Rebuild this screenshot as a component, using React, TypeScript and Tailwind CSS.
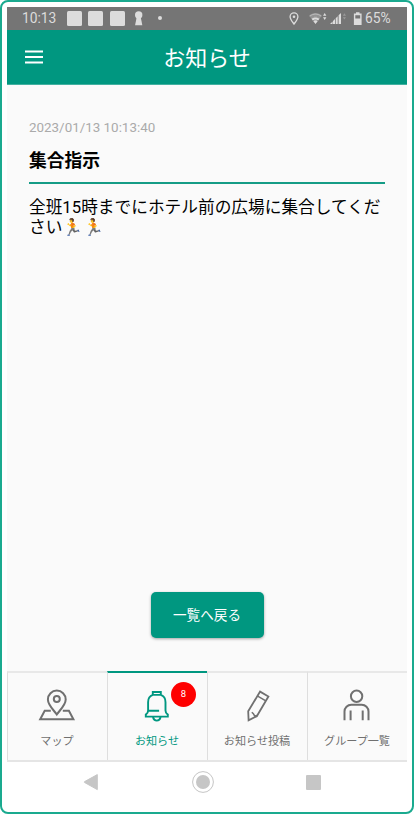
import React from "react";

type Tab = {
    label: string;
    icon: React.ReactNode;
    active?: boolean;
    badge?: number;
};

function MapIcon() {
    return (
        <svg width="38" height="34" viewBox="0 0 38 34" fill="none" stroke="currentColor" strokeWidth="2">
            <path d="M18.800 26.500C15.500 21.800 9.900 17 9.900 11.500a8.900 8.900 0 0 1 17.800 0C27.700 17 22.100 21.800 18.800 26.500z" />
            <circle cx="18.800" cy="10.900" r="3" />
            <path d="M12.800 22.800H6.700L2.200 31.300h33.200L30.900 22.800H24.800" />
        </svg>
    );
}

function BellIcon() {
    return (
        <svg width="26" height="34" viewBox="0 0 26 34" fill="none" stroke="currentColor" strokeWidth="1.9">
            <path d="M8.800 7.600V4h8v3.600M8.800 6.900C5.600 8 4.100 10.800 4.100 14.200v8.200c0 2-.8 3.200-2.300 4.200v2h22v-2c-1.500-1-2.300-2.200-2.300-4.200v-8.200c0-3.400-1.500-6.200-4.700-7.300z" />
            <path d="M4.100 22.700h11M9 29c.5 2.300 1.900 3.600 3.800 3.600s3.300-1.300 3.800-3.600" />
        </svg>
    );
}

function PencilIcon() {
    return (
        <svg width="26" height="34" viewBox="0 0 26 34" fill="none" stroke="currentColor" strokeWidth="1.8">
            <path d="M16.100 3.600l8.300 4.900-11.600 19.700-8.200 4.100-.4-9.100z" />
            <path d="M13.300 7.900l8.500 5M7.800 24.200l1.600 1.600 1.400 2.300 2.400-.5" strokeWidth="1.5" />
        </svg>
    );
}

function PersonIcon() {
    return (
        <svg width="28" height="34" viewBox="0 0 28 34" fill="none" stroke="currentColor" strokeWidth="2">
            <circle cx="13.600" cy="8.200" r="5.700" />
            <path d="M1.500 32.300V23.500a6.800 6.800 0 0 1 6.800-6.800h10.400a6.800 6.800 0 0 1 6.800 6.800V32.300M7.600 22.500V32.300M19.700 22.500V32.300" />
        </svg>
    );
}

const tabs: Tab[] = [
    { label: "マップ", icon: <MapIcon /> },
    { label: "お知らせ", icon: <BellIcon />, active: true, badge: 8 },
    { label: "お知らせ投稿", icon: <PencilIcon /> },
    { label: "グループ一覧", icon: <PersonIcon /> },
];

function StatusBar() {
    return (
        <div className="flex h-[23px] shrink-0 items-center bg-[#757575] pr-[16px] pl-[15px] text-[#dcdcdc]">
            <span className="w-[45px] text-[13.8px] leading-none">10:13</span>
            <div className="flex gap-[6.4px]">
                <span className="h-[15px] w-[15px] rounded-[1.5px] bg-[#dcdcdc]" />
                <span className="h-[15px] w-[15px] rounded-[1.5px] bg-[#dcdcdc]" />
                <span className="h-[15px] w-[15px] rounded-[1.5px] bg-[#dcdcdc]" />
            </div>
            <svg className="ml-[9px]" width="10" height="15" viewBox="0 0 10 15" fill="currentColor">
                <circle cx="4.700" cy="4" r="3.700" />
                <path d="M2.700 6h4l1.600 8.300H1.100z" />
            </svg>
            <span className="mb-px ml-[14px] h-1 w-1 rounded-full bg-[#dcdcdc]" />
            <svg className="mr-[9px] ml-auto" width="10" height="13" viewBox="0 0 10 13" fill="none" stroke="currentColor" strokeWidth="1.3">
                <path d="M5 12C3.200 9.500 1.100 7.200 1.100 4.700a3.900 3.900 0 0 1 7.800 0C8.900 7.200 6.800 9.500 5 12z" />
                <circle cx="5" cy="4.700" r="1.300" fill="currentColor" stroke="none" />
            </svg>
            {/* wifi, signal, battery */}
            <svg className="mr-[2px] shrink-0" width="55" height="16" viewBox="0 0 55 16" fill="currentColor">
                <path d="M1 4.500C4.500 1.100 10.500 1.100 14 4.500L7.500 13z" opacity=".3" />
                <path d="M3.200 7.200c2.500-2.100 6.100-2.100 8.600 0L7.500 13z" />
                <path d="M1.800 5.200c3.400-2.800 8-2.800 11.400 0" fill="none" stroke="#dcdcdc" strokeWidth="1" opacity=".55" />
                <path d="M3.200 7.600c2.600-2 6-2 8.600 0M5 9.800c1.600-1.200 3.400-1.200 5 0" fill="none" stroke="#757575" strokeWidth=".7" />
                <path d="M15 4.700l1.700-2.700 1.700 2.700zM15 6.200h3.400l-1.700 2.700z" />
                <path d="M22 13l2.600-2.600V13zM25 9.900l2-2v5.100h-2zM27.700 7.200l2-2V13h-2zM30.600 4.300l2.400-2.400V13h-2.400z" />
                <path d="M34.800 4.700l1.600-2.400L38 4.700zM34.800 6.200H38l-1.600 2.400z" opacity=".35" />
                <path d="M48 1.300h3.500v1.300h2.100V14h-7.700V2.600H48zM47.300 4.200v3.300h4.900V4.200z" fillRule="evenodd" />
            </svg>
            <span className="w-[26px] text-[13.8px] leading-none">65%</span>
        </div>
    );
}

function Header() {
    return (
        <header className="flex h-[55px] shrink-0 items-center border-b border-[#42b0a0] bg-[#009780] px-[18px] text-white">
            <button className="w-[18px]" aria-label="menu">
                <svg width="18" height="14" viewBox="0 0 18 14" stroke="currentColor" strokeWidth="1.8">
                    <path d="M0 1.500h18M0 7h18M0 12.500h18" />
                </svg>
            </button>
            <h1 className="flex-1 pt-[3px] pr-[18px] text-center text-[22px] leading-[50px]">お知らせ</h1>
        </header>
    );
}

function Notice() {
    return (
        <main className="flex flex-1 flex-col bg-[#fafafa] px-[22px] pt-[33px]">
            <time className="text-[13.4px] leading-5 text-[#aaa]">2023/01/13 10:13:40</time>
            <h2 className="mt-[11px] border-b-2 border-[#159c86] pb-[9px] text-[17.8px] leading-6 font-bold text-black">集合指示</h2>
            <p className="mt-[14px] text-[16.7px] leading-5 text-black">
                全班15時までにホテル前の広場に集合してください🏃🏃
            </p>
            <button className="mt-auto mb-[33px] h-[46px] w-[113px] self-center rounded-[5px] bg-[#009780] text-[13.6px] text-white shadow-[0_1px_3px_rgba(0,0,0,0.35)]">
                一覧へ戻る
            </button>
        </main>
    );
}

function TabBar() {
    return (
        <nav className="grid h-[91px] shrink-0 grid-cols-4 border-b-2 border-[#e5e5e5] bg-[#fafafa]">
            {tabs.map((tab) => (
                <div
                    key={tab.label}
                    className={`relative flex flex-col items-center border-t-2 border-l border-l-[#dedede] pt-[15px] pr-px ${
                        tab.active ? "border-t-[#009780] text-[#009780]" : "border-t-[#e8e8e8] text-[#707070]"
                    }`}
                >
                    {tab.icon}
                    <span className="mt-[12px] text-[11.1px] leading-4">{tab.label}</span>
                    {tab.badge && (
                        <span className="absolute top-[9px] left-[63px] flex h-[25px] w-[25px] items-center justify-center rounded-full bg-[#fe0000] text-[9.5px] text-white">
                            {tab.badge}
                        </span>
                    )}
                </div>
            ))}
        </nav>
    );
}

function SystemNav() {
    return (
        <div className="flex h-[45px] shrink-0 justify-between bg-white pt-[9px] pr-[86px] pl-[76px] text-[#c6c6c6]">
            <svg width="16" height="22" viewBox="0 0 16 22" fill="currentColor">
                <path d="M14.300 3.600v15L1.600 11.500a.5.500 0 0 1 0-.9z" stroke="currentColor" strokeWidth="1" strokeLinejoin="round" />
            </svg>
            <svg width="22" height="22" viewBox="0 0 22 22">
                <circle cx="11" cy="11" r="10.400" fill="none" stroke="currentColor" strokeWidth="1" />
                <circle cx="11" cy="11" r="7" fill="currentColor" />
            </svg>
            <span className="mt-[4px] h-[15px] w-[15px] rounded-[1px] bg-[#c6c6c6]" />
        </div>
    );
}

export default function App() {
    return (
        <div className="flex h-[814px] w-[414px] flex-col rounded-[8px] border-2 border-[#1aaa8f] bg-white p-[5px] font-[Roboto,'Noto_Sans_CJK_JP',sans-serif]">
            <StatusBar />
            <Header />
            <Notice />
            <TabBar />
            <SystemNav />
        </div>
    );
}
